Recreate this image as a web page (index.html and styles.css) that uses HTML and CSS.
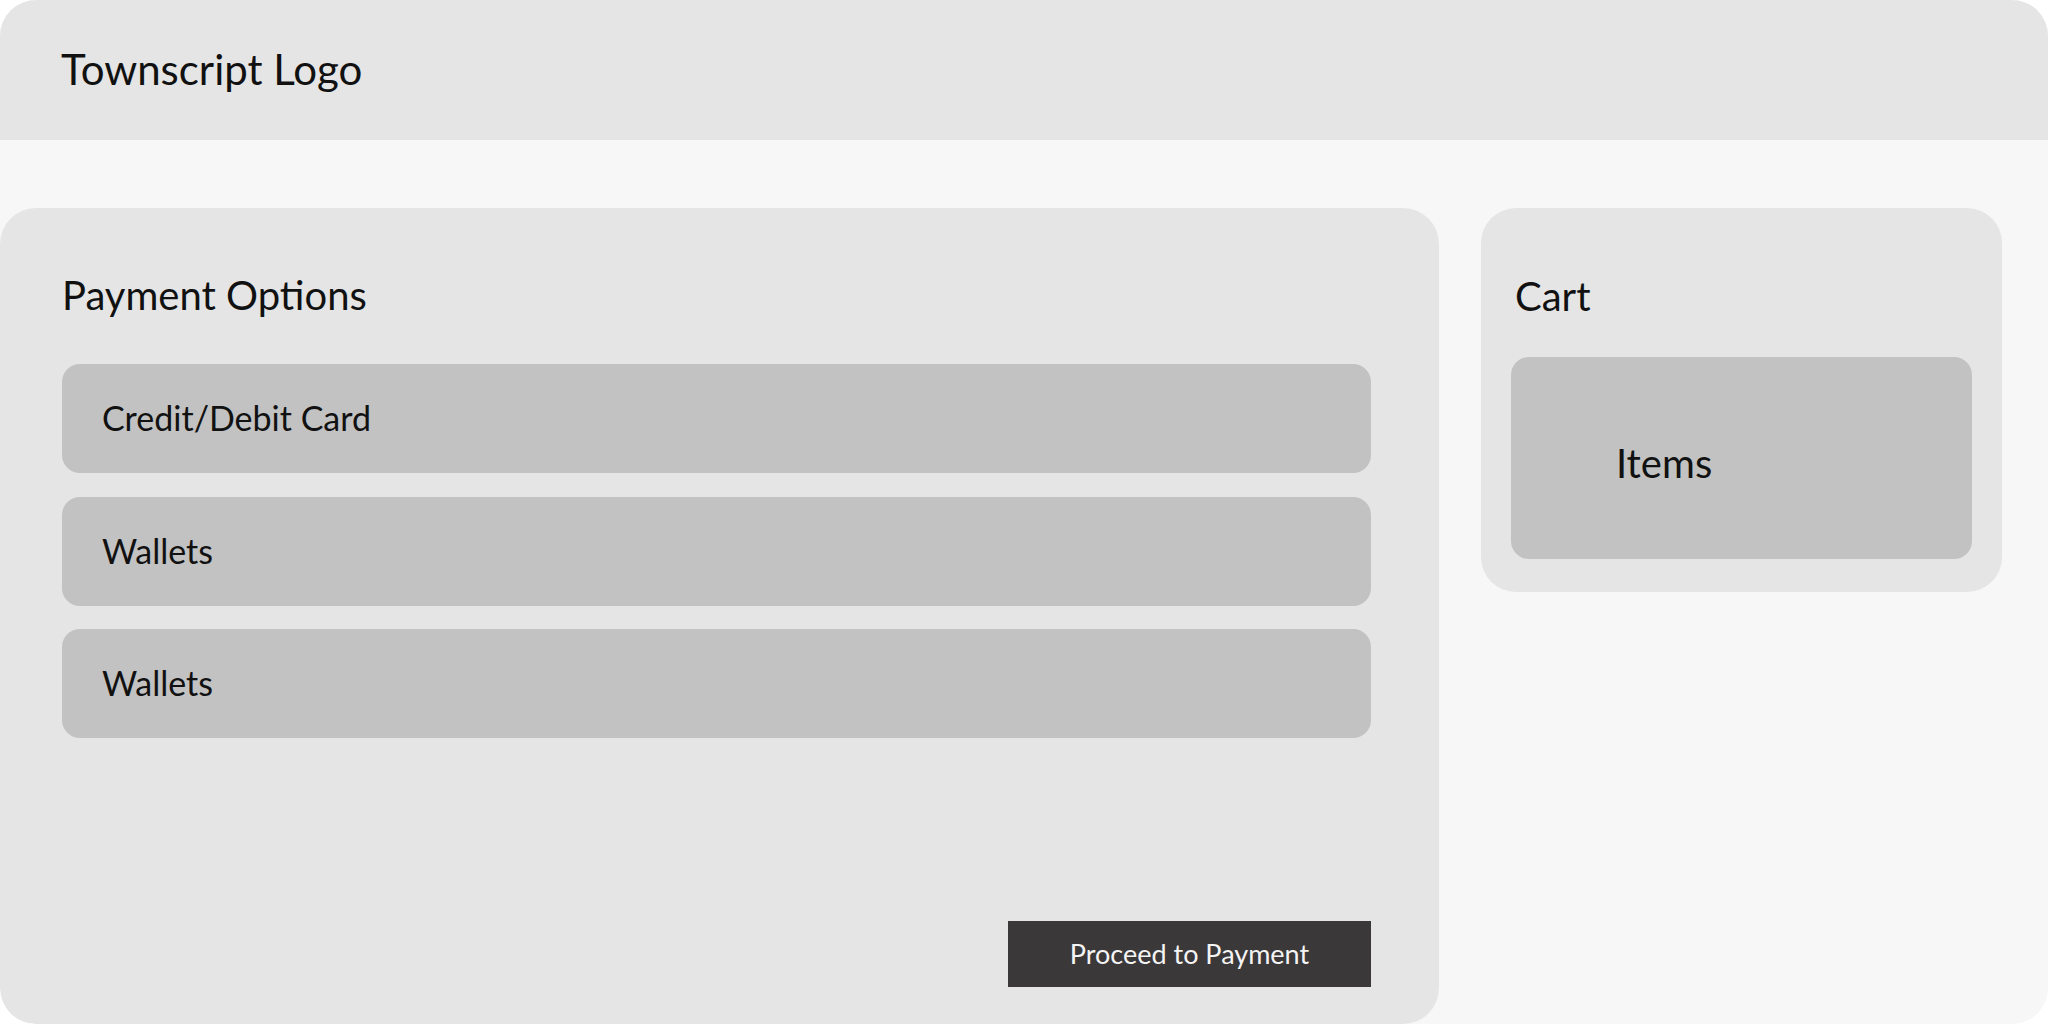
FILE: index.html
```html
<!DOCTYPE html>
<html lang="en">
<head>
<meta charset="utf-8">
<title>Townscript Checkout</title>
<link rel="stylesheet" href="styles.css">
</head>
<body>
<div class="frame">
  <header class="topbar">
    <div class="logo">Townscript Logo</div>
  </header>
  <main class="content">
    <section class="payment">
      <h2 class="panel-title">Payment Options</h2>
      <div class="options">
        <div class="option">Credit/Debit Card</div>
        <div class="option">Wallets</div>
        <div class="option">Wallets</div>
      </div>
      <button class="proceed">Proceed to Payment</button>
    </section>
    <aside class="cart">
      <h2 class="panel-title cart-title">Cart</h2>
      <div class="items">Items</div>
    </aside>
  </main>
</div>
</body>
</html>
```

FILE: styles.css
```css
html, body {
  margin: 0;
  padding: 0;
  background: #ffffff;
}

body {
  font-family: "Lato", "Liberation Sans", sans-serif;
  color: #111111;
}

.frame {
  width: 2048px;
  height: 1024px;
  border-radius: 36px;
  overflow: hidden;
  background: #f7f7f7;
  display: flex;
  flex-direction: column;
}

.topbar {
  height: 140px;
  box-sizing: border-box;
  background: #e5e5e5;
  padding: 44px 0 0 61px;
  flex: none;
}

.logo {
  font-size: 42px;
  line-height: 1.2;
  font-weight: 400;
}

.content {
  flex: 1;
  display: flex;
  align-items: flex-start;
  gap: 42px;
  padding-top: 68px;
}

.payment {
  width: 1439px;
  height: 816px;
  flex: none;
  box-sizing: border-box;
  background: #e5e5e5;
  border-radius: 36px;
  padding: 63px 68px 37px 62px;
  display: flex;
  flex-direction: column;
}

.panel-title {
  margin: 0;
  font-size: 40px;
  line-height: 1.2;
  font-weight: 400;
}

.options {
  margin-top: 45px;
  display: flex;
  flex-direction: column;
  gap: 23.5px;
}

.option {
  height: 109px;
  box-sizing: border-box;
  background: #c2c2c2;
  border-radius: 18px;
  padding-left: 40px;
  display: flex;
  align-items: center;
  font-size: 34px;
  line-height: 1.2;
}

.proceed {
  margin-top: auto;
  align-self: flex-end;
  width: 363px;
  height: 66px;
  border: none;
  border-radius: 0;
  background: #3a3839;
  color: #f4f4f4;
  font-family: "Lato", "Liberation Sans", sans-serif;
  font-size: 27px;
  line-height: 1.2;
  padding: 0;
}

.cart {
  width: 521px;
  height: 384px;
  flex: none;
  box-sizing: border-box;
  background: #e5e5e5;
  border-radius: 35px;
  padding: 64px 30px 0 30px;
}

.cart-title {
  padding-left: 4px;
}

.items {
  margin-top: 37px;
  height: 202px;
  box-sizing: border-box;
  background: #c2c2c2;
  border-radius: 18px;
  padding: 82px 0 0 105px;
  font-size: 40px;
  line-height: 1.2;
}
```
